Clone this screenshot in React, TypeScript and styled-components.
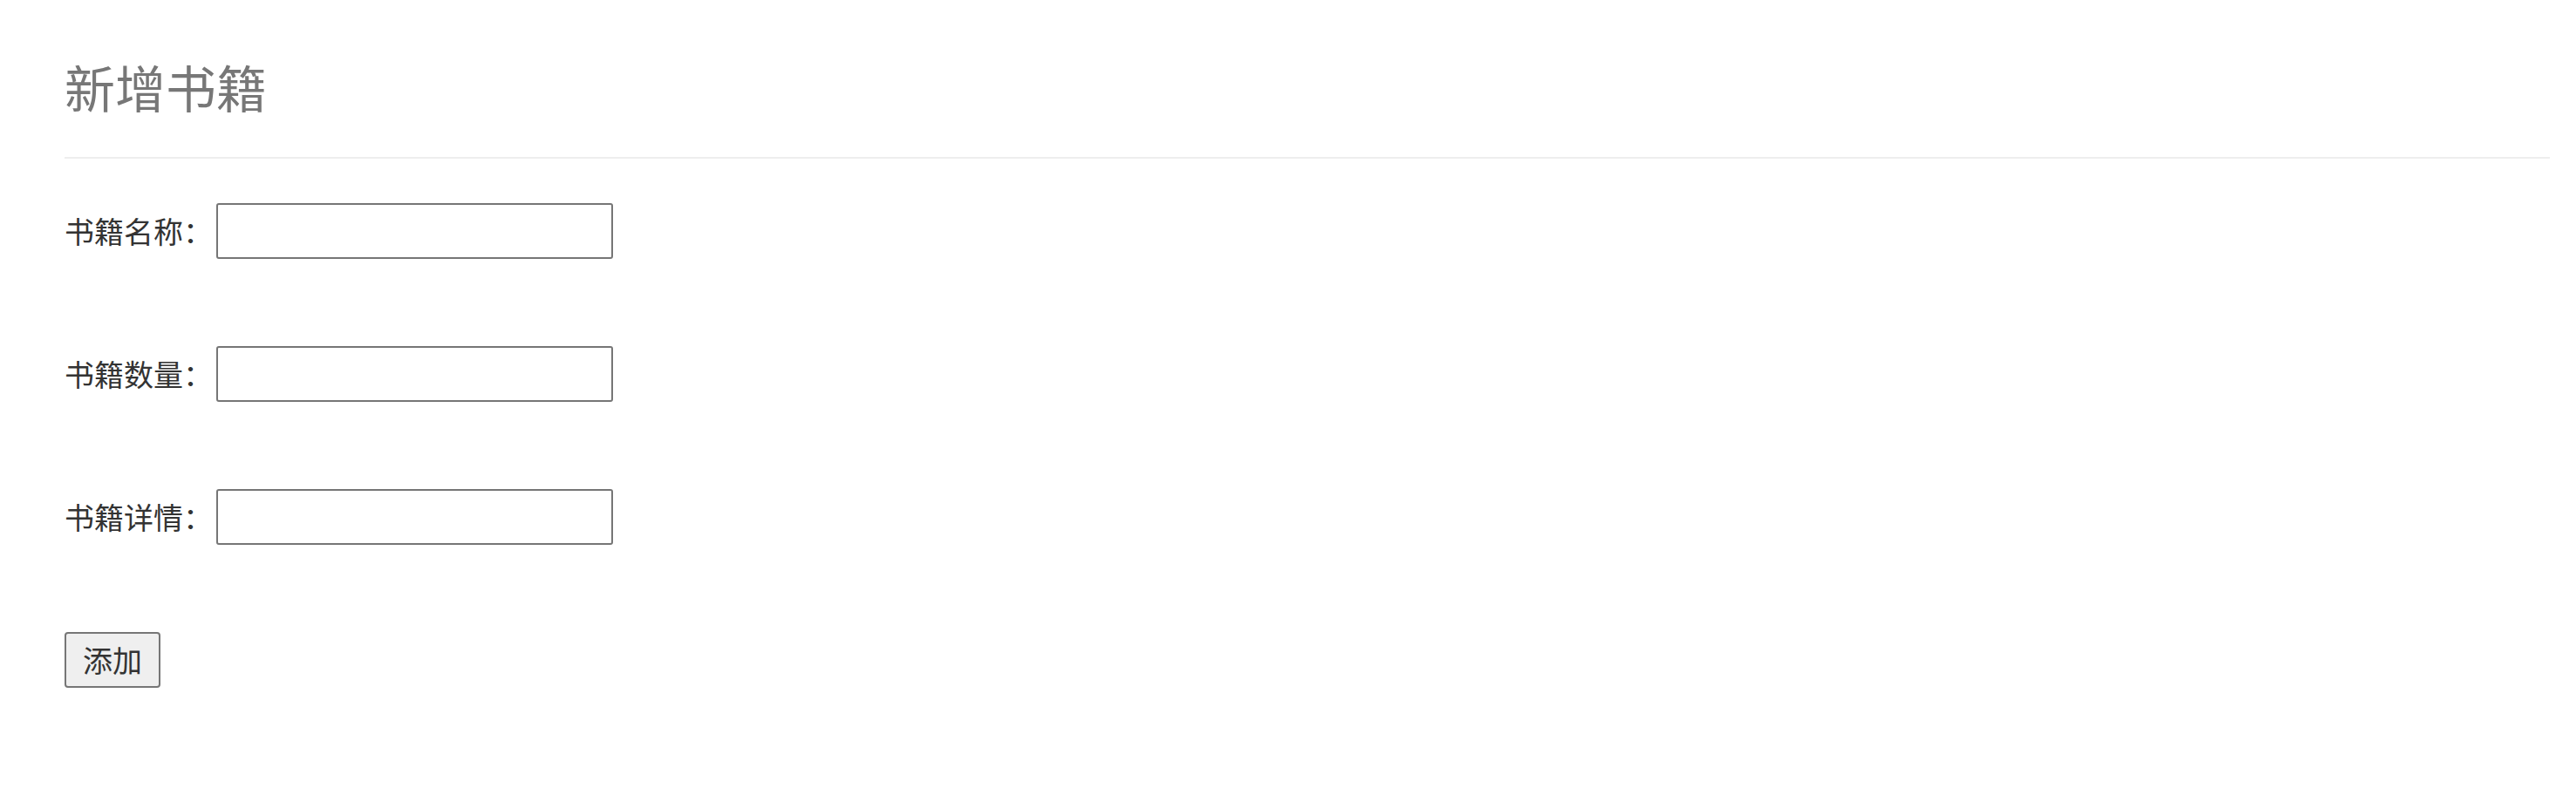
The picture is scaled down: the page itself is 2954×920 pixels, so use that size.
import React from "react";
import styled, { createGlobalStyle } from "styled-components";

const GlobalStyle = createGlobalStyle`
  html, body {
    margin: 0;
    padding: 0;
    background: #ffffff;
  }
  body {
    font-family: "Noto Sans CJK SC", "Noto Sans", sans-serif;
    color: #333333;
  }
`;

const Page = styled.div`
  padding: 0 30px 0 74px;
`;

const Header = styled.header`
  padding-top: 66px;
  padding-bottom: 48px;
  border-bottom: 2px solid #eeeeee;
`;

const Title = styled.h1`
  margin: 0;
  font-size: 58px;
  line-height: 66px;
  font-weight: 400;
  color: #777777;
`;

const Form = styled.form`
  display: flex;
  flex-direction: column;
  align-items: flex-start;
  gap: 100px;
  padding-top: 51px;
`;

const Row = styled.div`
  display: flex;
  align-items: center;
  height: 64px;
`;

const Label = styled.label`
  font-size: 34px;
  line-height: 64px;
  color: #333333;
  margin-right: 4px;
`;

const Input = styled.input`
  box-sizing: border-box;
  width: 455px;
  height: 64px;
  border: 2px solid #767676;
  border-radius: 3px;
  padding: 2px 4px;
  font-size: 26px;
  background: #ffffff;
  outline: none;
`;

const Button = styled.button`
  box-sizing: border-box;
  height: 64px;
  padding: 0 19px;
  border: 2px solid #767676;
  border-radius: 4px;
  background: #efefef;
  font-family: "Noto Sans CJK SC", "Noto Sans", sans-serif;
  font-size: 34px;
  line-height: 1;
  color: #333333;
  cursor: pointer;
`;

const fields = ["书籍名称：", "书籍数量：", "书籍详情："];

export default function App() {
  return (
    <Page>
      <GlobalStyle />
      <Header>
        <Title>新增书籍</Title>
      </Header>
      <Form onSubmit={(e) => e.preventDefault()}>
        {fields.map((f) => (
          <Row key={f}>
            <Label>{f}</Label>
            <Input type="text" />
          </Row>
        ))}
        <Button type="submit">添加</Button>
      </Form>
    </Page>
  );
}
